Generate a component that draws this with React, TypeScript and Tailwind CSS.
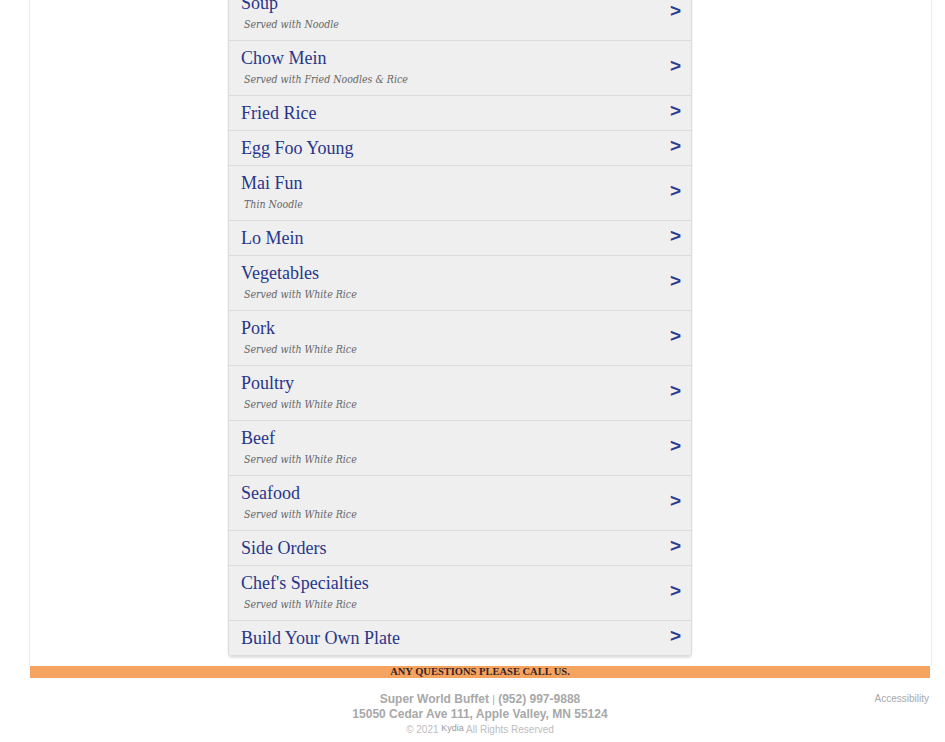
const items: { name: string; sub?: string }[] = [
  { name: "Soup", sub: "Served with Noodle" },
  { name: "Chow Mein", sub: "Served with Fried Noodles & Rice" },
  { name: "Fried Rice" },
  { name: "Egg Foo Young" },
  { name: "Mai Fun", sub: "Thin Noodle" },
  { name: "Lo Mein" },
  { name: "Vegetables", sub: "Served with White Rice" },
  { name: "Pork", sub: "Served with White Rice" },
  { name: "Poultry", sub: "Served with White Rice" },
  { name: "Beef", sub: "Served with White Rice" },
  { name: "Seafood", sub: "Served with White Rice" },
  { name: "Side Orders" },
  { name: "Chef's Specialties", sub: "Served with White Rice" },
  { name: "Build Your Own Plate" },
];

function MenuRow({ name, sub }: { name: string; sub?: string }) {
  return (
    <a
      href="#"
      className="flex items-center border-b border-[#dcdcdc] bg-[#efefef] pl-3 pr-[10px] py-[6px] last:border-b-0"
    >
      <div className="flex-1">
        <div className="text-[18px] leading-[22px] text-[#27368a] [font-family:'Liberation_Serif',serif]">
          {name}
        </div>
        {sub && (
          <div className="pl-[3px] text-[10.5px] leading-[20px] italic text-[#666] [font-family:'DejaVu_Serif_Condensed','DejaVu_Serif',serif]">
            {sub}
          </div>
        )}
      </div>
      <span className="-mt-[6px] text-[19px] font-bold leading-none text-[#2a3a8f] [font-family:'Liberation_Sans',sans-serif]">
        &gt;
      </span>
    </a>
  );
}

export default function App() {
  return (
    <div className="h-[742px] overflow-hidden bg-white [font-family:'Liberation_Sans',Arial,sans-serif]">
      <div className="ml-[29px] mr-[13px] -mt-[14px] border-x border-[#ececec] pb-[10px]">
        <div className="ml-[198px] w-[464px] overflow-hidden rounded-b-[4px] border border-t-0 border-[#dcdcdc] shadow-[0_2px_2px_rgba(0,0,0,0.12)]">
          {items.map((it) => (
            <MenuRow key={it.name} name={it.name} sub={it.sub} />
          ))}
        </div>
      </div>

      <div className="ml-[30px] mr-[15px] bg-[#f5a45f] text-center text-[10.5px] font-bold leading-[12px] text-[#3a1f2a] [font-family:'Liberation_Serif',serif]">
        ANY QUESTIONS PLEASE CALL US.
      </div>

      <footer className="relative ml-[30px] mr-[15px] pt-[14px] text-center">
        <div className="text-[12px] font-bold leading-[14px] text-[#a8a8a8]">
          Super World Buffet <span className="text-[10px] font-normal">|</span> (952) 997-9888
        </div>
        <div className="text-[12px] font-bold leading-[14px] text-[#a8a8a8]">
          15050 Cedar Ave 111, Apple Valley, MN 55124
        </div>
        <div className="mt-[2px] text-[10px] leading-[14px] text-[#bdbdbd]">
          © 2021 <span className="relative -top-[2px] text-[9px] text-[#999]">Kydia</span> All Rights Reserved
        </div>
        <a href="#" className="absolute right-[1px] top-[13px] text-[10px] text-[#a8a8a8]">
          Accessibility
        </a>
      </footer>
    </div>
  );
}
